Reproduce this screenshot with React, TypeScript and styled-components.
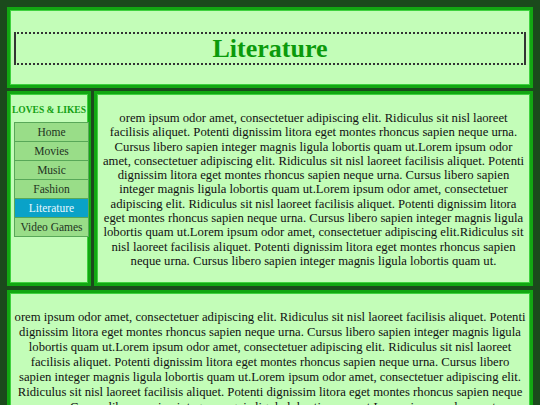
import React from "react";
import styled, { createGlobalStyle } from "styled-components";

const GlobalStyle = createGlobalStyle`
  html, body {
    margin: 0;
    padding: 0;
    background: #1b4a1c;
    font-family: "Liberation Serif", "Times New Roman", serif;
  }
`;

const Page = styled.div`
  padding: 7px;
  display: flex;
  flex-direction: column;
  gap: 3px;
`;

const Panel = styled.section`
  box-sizing: border-box;
  background: #c3fdb8;
  border: 3px solid #12a712;
  box-shadow: inset 0 0 0 1px #3fd23f;
`;

const Header = styled(Panel)`
  padding: 22px 4px 20px;
`;

const Title = styled.h1`
  margin: 0;
  font-size: 26px;
  line-height: 29px;
  font-weight: bold;
  color: #0b9a0b;
  text-align: center;
  border-top: 2px dotted #333;
  border-bottom: 2px dotted #333;
  border-left: 2px solid #333;
  border-right: 2px solid #333;
`;

const Row = styled.div`
  display: flex;
  gap: 3px;
`;

const Sidebar = styled(Panel)`
  width: 84px;
  flex: none;
  padding: 11px 0 0 4px;
`;

const SideTitle = styled.h3`
  margin: 0 0 7px -4px;
  font-size: 9.5px;
  font-weight: bold;
  color: #13a013;
  text-align: center;
  white-space: nowrap;
`;

const Nav = styled.ul`
  list-style: none;
  margin: 0;
  padding: 0;
  width: 73px;
  border: 1px solid #58a858;
`;

const NavItem = styled.li<{ $active?: boolean }>`
  height: 18px;
  line-height: 18px;
  text-align: center;
  font-size: 11.5px;
  color: ${(p) => (p.$active ? "#e8f8ff" : "#223322")};
  background: ${(p) => (p.$active ? "#0aa2c8" : "#99dd88")};
  & + & {
    border-top: 1px solid #58a858;
  }
`;

const Main = styled(Panel)`
  flex: 1;
  padding: 5px 4px 15px;
`;

const Text = styled.p`
  margin: 12px 0 0;
  font-size: 12.7px;
  line-height: 14.3px;
  color: #111;
  text-align: center;
`;

const Footer = styled(Panel)`
  padding: 4px 3.5px 20px;
  margin-top: 1px;
`;

const FooterText = styled(Text)`
  line-height: 15px;
  margin-top: 12.5px;
`;

const lorem =
  "orem ipsum odor amet, consectetuer adipiscing elit. Ridiculus sit nisl laoreet facilisis aliquet. Potenti dignissim litora eget montes rhoncus sapien neque urna. Cursus libero sapien integer magnis ligula lobortis quam ut.";

const withLorem = (s: string) => s.replace("quam ut.", "quam ut.Lorem");
const tail = lorem.slice(5);

const mainText = [
  withLorem(lorem),
  withLorem(tail),
  withLorem(tail),
  tail.replace("elit. Ridiculus", "elit.Ridiculus"),
].join(" ");

const footerText = [
  withLorem(lorem),
  withLorem(tail),
  withLorem(tail),
  withLorem(tail),
  tail,
].join(" ");

const links = ["Home", "Movies", "Music", "Fashion", "Literature", "Video Games"];

export default function App() {
  return (
    <>
      <GlobalStyle />
      <Page>
        <Header>
          <Title>Literature</Title>
        </Header>
        <Row>
          <Sidebar>
            <SideTitle>LOVES &amp; LIKES</SideTitle>
            <Nav>
              {links.map((l) => (
                <NavItem key={l} $active={l === "Literature"}>
                  {l}
                </NavItem>
              ))}
            </Nav>
          </Sidebar>
          <Main>
            <Text>{mainText}</Text>
          </Main>
        </Row>
        <Footer>
          <FooterText>{footerText}</FooterText>
        </Footer>
      </Page>
    </>
  );
}
